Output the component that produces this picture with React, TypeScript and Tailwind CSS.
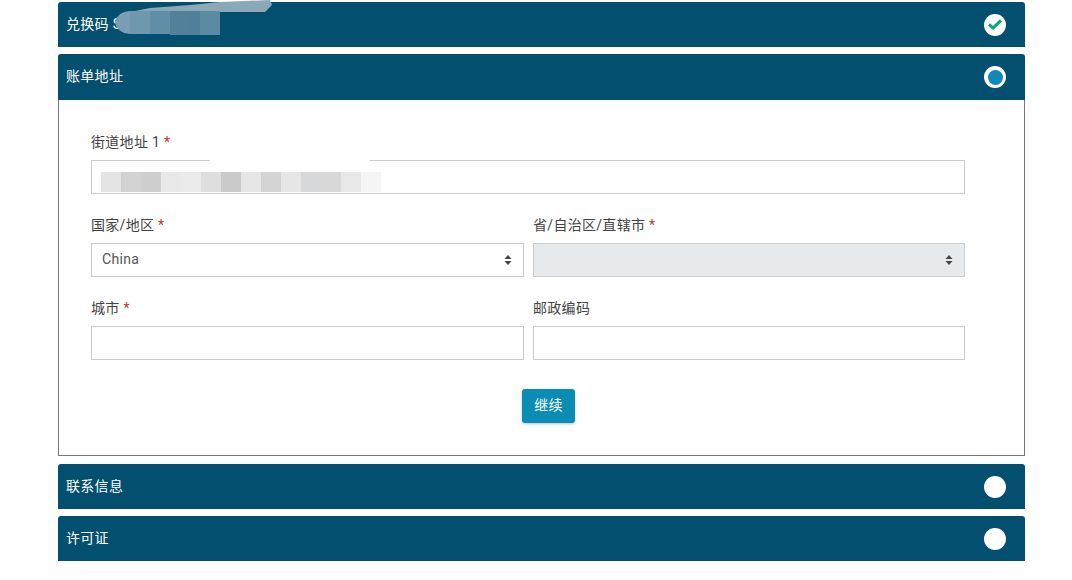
const font = { fontFamily: '"Roboto", "Noto Sans CJK SC", sans-serif' };

function Circle({ kind }: { kind: "check" | "active" | "empty" }) {
  return (
    <span className="relative flex h-[22px] w-[22px] items-center justify-center rounded-full bg-white">
      {kind === "active" && <span className="h-[15px] w-[15px] rounded-full bg-[#1088b8]" />}
      {kind === "check" && (
        <svg width="16" height="13" viewBox="0 0 16 13" fill="none">
          <path d="M2 6.4 L6 10 L14 2.4" stroke="#00a878" strokeWidth="3" />
        </svg>
      )}
    </span>
  );
}

function Header({ title, kind, cls, children }: { title: string; kind: "check" | "active" | "empty"; cls: string; children?: React.ReactNode }) {
  return (
    <div className={`relative flex items-center justify-between bg-[#024f70] pl-[8px] pr-[19px] text-[14px] tracking-[0.3px] text-white ${cls}`}>
      <span className="pb-[1px]">{title}</span>
      {children}
      <Circle kind={kind} />
    </div>
  );
}

function Label({ text, req }: { text: string; req?: boolean }) {
  return (
    <div className="h-[17px] text-[14px] leading-[17px] tracking-[0.3px] text-[#444]">
      {text}
      {req && <span className="text-[#c0392b]"> *</span>}
    </div>
  );
}

const boxCls = "h-[34px] w-full border border-[#ccc] bg-white";

function Arrows() {
  return (
    <svg className="absolute right-[11px] top-[10px]" width="8" height="12" viewBox="0 0 8 12" fill="#444">
      <path d="M4 1 L7.5 5 L0.5 5 Z" />
      <path d="M4 11 L7.5 7 L0.5 7 Z" />
    </svg>
  );
}

const shades = ["#e4e4e4", "#d2d2d2", "#cfcfcf", "#e8e8e8", "#ebebeb", "#dedede", "#cacaca", "#e6e6e6", "#d4d4d4", "#e6e6e6", "#d6d8da", "#d8d8d8", "#e8e8e8", "#f5f5f5"];

export default function App() {
  return (
    <div className="min-h-[580px] w-[1072px] bg-white pl-[58px] pt-[2px]" style={font}>
      <div className="w-[967px]">
        <Header title="兑换码 S" kind="check" cls="h-[45px] rounded-t-[3px]">
          <svg className="absolute left-[55px] top-[-2px]" width="220" height="38" viewBox="0 0 220 38">
            <path d="M4 22 Q6 13 18 12 L75 12 L162 12 L52 12 Z" fill="#7fa3b6" />
            <path d="M17 12 L37 8 L77 5 L107 2 L157 0 L159 5 L152 12 Z" fill="#8aa8b8" />
            <path d="M2 22 Q4 12 17 11 L17 34 Q4 33 2 22 Z" fill="#7a9db1" />
            <rect x="17" y="11" width="20" height="23" fill="#6f98ac" />
            <rect x="37" y="11" width="20" height="23" fill="#5f8ea6" />
            <rect x="57" y="11" width="20" height="24" fill="#527f99" />
            <rect x="77" y="11" width="10" height="24" fill="#4f7f9a" />
            <rect x="87" y="11" width="20" height="24" fill="#5a8ba3" />
          </svg>
        </Header>

        <Header title="账单地址" kind="active" cls="mt-[7px] h-[46px] rounded-t-[3px]" />

        <div className="h-[356px] border border-t-0 border-[#777] bg-white pl-[32px] pr-[59px] pt-[34px]">
          <Label text="街道地址 1" req />
          <div className={`relative mt-[9px] flex items-start pl-[9px] pt-[11px] ${boxCls}`}>
            {shades.map((c, i) => (
              <span key={i} className="h-[20px] w-[20px]" style={{ background: c }} />
            ))}
            <span className="absolute left-[118px] top-[-3px] h-[5px] w-[160px] bg-white" />
          </div>

          <div className="mt-[23px] grid grid-cols-[433px_432px] gap-x-[9px]">
            <div>
              <Label text="国家/地区" req />
              <div className={`relative mt-[9px] flex items-center pb-[2px] pl-[10px] text-[14px] tracking-[0.3px] text-[#555] ${boxCls}`}>
                China
                <Arrows />
              </div>
            </div>
            <div>
              <Label text="省/自治区/直辖市" req />
              <div className="relative mt-[9px] h-[34px] w-full border border-[#ccc] bg-[#e7eaec]">
                <Arrows />
              </div>
            </div>
            <div className="mt-[23px]">
              <Label text="城市" req />
              <div className={`mt-[9px] ${boxCls}`} />
            </div>
            <div className="mt-[23px]">
              <Label text="邮政编码" />
              <div className={`mt-[9px] ${boxCls}`} />
            </div>
          </div>

          <div className="ml-[431px] mt-[29px] flex h-[34px] w-[53px] items-center justify-center rounded-[3px] bg-[#0a8db5] pb-[2px] text-[14px] tracking-[0.3px] text-white shadow-[0_1px_3px_rgba(0,0,0,0.25)]">
            继续
          </div>
        </div>

        <Header title="联系信息" kind="empty" cls="mt-[8px] h-[45px] rounded-t-[3px]" />
        <Header title="许可证" kind="empty" cls="mt-[7px] h-[45px] rounded-t-[3px]" />
      </div>
    </div>
  );
}
